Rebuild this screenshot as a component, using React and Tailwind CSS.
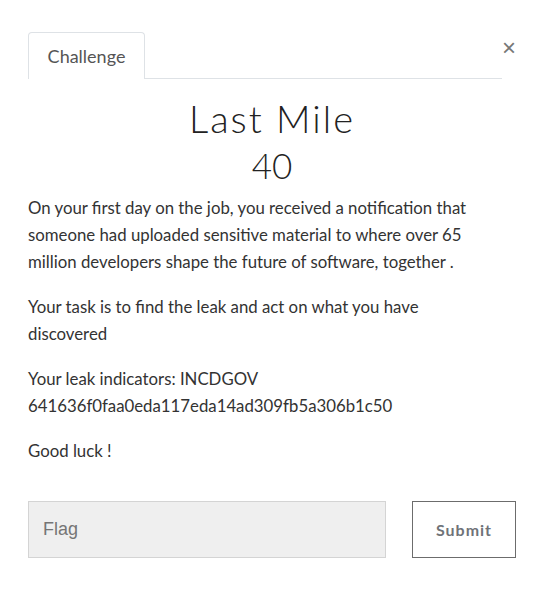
import React from "react";

export default function App() {
  return (
    <div className="min-h-[600px] w-[549px] bg-white text-[#333]" style={{ fontFamily: "Lato, 'Noto Sans', sans-serif" }}>
      <div className="pt-[32px] pl-[28px] pr-[33px]">
        <div className="flex items-start">
          <div className="flex flex-1 items-end">
            <div className="h-[47px] w-[117px] rounded-t-[4px] border border-b-0 border-[#dee2e6] flex items-center justify-center text-[18px] text-[#555]">
              Challenge
            </div>
            <div className="flex-1 border-b border-[#dee2e6]"></div>
          </div>
          <button className="mt-[4px] w-[14px] text-[#777] text-[24px] leading-none" style={{ fontFamily: "'Liberation Sans', sans-serif" }}>×</button>
        </div>

        <h1 className="mt-[16px] text-center text-[38px] leading-[46px] tracking-[2px] text-[#222]" style={{ fontWeight: 300 }}>
          Last Mile
        </h1>
        <div className="mt-[4px] text-center text-[35px] leading-[40px] text-[#222]" style={{ fontWeight: 300 }}>
          40
        </div>

        <div className="mt-[9px] w-[460px] text-[16.8px] leading-[27px] text-[#333]">
          <p className="mb-[18px]">
            On your first day on the job, you received a notification that someone had uploaded sensitive material to where over 65 million developers shape the future of software, together .
          </p>
          <p className="mb-[18px]">Your task is to find the leak and act on what you have discovered</p>
          <p className="mb-[18px]">
            Your leak indicators: INCDGOV 641636f0faa0eda117eda14ad309fb5a306b1c50
          </p>
          <p>Good luck !</p>
        </div>

        <div className="mt-[37px] flex items-start">
          <input
            placeholder="Flag"
            className="h-[57px] w-[358px] border border-[#d4d4d4] bg-[#efefef] px-[14px] text-[18px] placeholder-[#757575] outline-none"
            style={{ fontFamily: "'Liberation Sans', Arial, sans-serif" }}
          />
          <button className="ml-[26px] h-[57px] w-[104px] border border-[#6c6c6c] bg-white text-[16px] font-bold tracking-[1px] text-[#6f7378]">
            Submit
          </button>
        </div>
      </div>
    </div>
  );
}
